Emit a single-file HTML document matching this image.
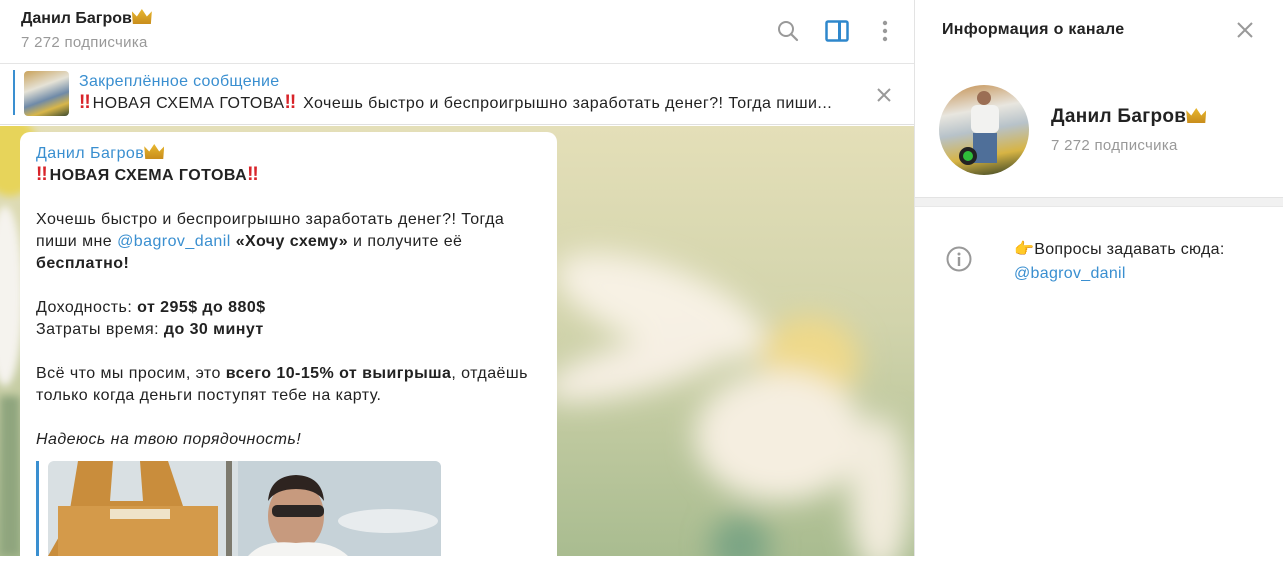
<!DOCTYPE html>
<html><head><meta charset="utf-8"><style>
*{margin:0;padding:0;box-sizing:border-box}
body{width:1283px;height:556px;overflow:hidden;font-family:"Liberation Sans","Noto Sans CJK SC",sans-serif;background:#fff;position:relative}
.abs{position:absolute}
.crown{display:inline-block;width:20px;height:15px;vertical-align:-1px;background:linear-gradient(#e8b830,#c98d1c);clip-path:polygon(0 15%,25% 50%,50% 0,75% 50%,100% 15%,95% 100%,5% 100%)}
.ex{color:#d8242a;font-weight:bold;font-size:19px;letter-spacing:-1px;margin-right:3px;line-height:16px}
.link{color:#3a8fd0}
b{font-weight:bold}
</style></head><body>
<!-- header -->
<div class="abs" style="left:0;top:0;width:914px;height:64px;background:#fff;border-bottom:1px solid #e5e5e5"></div>
<div class="abs" style="left:21px;top:9px;font-size:16px;font-weight:bold;color:#222">Данил Багров<span class="crown"></span></div>
<div class="abs" style="left:21px;top:34px;font-size:15px;color:#999;letter-spacing:.3px">7 272 подписчика</div>
<svg class="abs" style="left:776px;top:19px" width="24" height="24" viewBox="0 0 24 24"><circle cx="10" cy="10" r="7" fill="none" stroke="#999" stroke-width="2"/><path d="M15 15l6 6" stroke="#999" stroke-width="2.2" stroke-linecap="round"/></svg>
<svg class="abs" style="left:825px;top:20px" width="24" height="22" viewBox="0 0 24 22"><rect x="1.5" y="1.5" width="21" height="19" rx="1.5" fill="none" stroke="#2e87cc" stroke-width="2.5"/><rect x="13" y="2" width="3" height="18" fill="#2e87cc"/></svg>
<svg class="abs" style="left:880px;top:19px" width="10" height="24" viewBox="0 0 10 24"><circle cx="5" cy="4" r="2.2" fill="#999"/><circle cx="5" cy="12" r="2.2" fill="#999"/><circle cx="5" cy="20" r="2.2" fill="#999"/></svg>
<!-- pinned -->
<div class="abs" style="left:0;top:65px;width:914px;height:60px;background:#fff;border-bottom:1px solid #e0e0e0"></div>
<div class="abs" style="left:13px;top:70px;width:2px;height:45px;background:#3a8fd0"></div>
<div class="abs" style="left:24px;top:71px;width:45px;height:45px;border-radius:4px;background:linear-gradient(160deg,#c9a25a 0%,#e5e2d6 35%,#6f8aa8 60%,#d8b64a 78%,#3c4a2e 100%)"></div>
<div class="abs" style="left:79px;top:73px;font-size:16px;color:#3a8fd0;letter-spacing:.3px">Закреплённое сообщение</div>
<div class="abs" style="left:79px;top:95px;font-size:16px;color:#222;white-space:nowrap;letter-spacing:.45px"><span class="ex">!!</span>НОВАЯ СХЕМА ГОТОВА<span class="ex">!!</span> Хочешь быстро и беспроигрышно заработать денег?! Тогда пиши...</div>
<svg class="abs" style="left:876px;top:87px" width="16" height="16" viewBox="0 0 16 16"><path d="M2 2l12 12M14 2L2 14" stroke="#999" stroke-width="2"/></svg>
<!-- background -->
<svg class="abs" style="left:0;top:126px" width="914" height="430" viewBox="0 0 914 430">
<defs><linearGradient id="bg" x1="0" y1="0" x2="0" y2="1"><stop offset="0" stop-color="#e4dfb8"/><stop offset=".45" stop-color="#d2d4ac"/><stop offset="1" stop-color="#a9bc90"/></linearGradient>
<filter id="bl" x="-50%" y="-50%" width="200%" height="200%"><feGaussianBlur stdDeviation="14"/></filter>
<filter id="bl2"><feGaussianBlur stdDeviation="4"/></filter></defs>
<rect width="914" height="430" fill="url(#bg)"/>
<g filter="url(#bl)">
<ellipse cx="660" cy="180" rx="110" ry="40" fill="#f7f1e4" transform="rotate(20 660 180)"/>
<ellipse cx="640" cy="240" rx="100" ry="25" fill="#f6efe3" transform="rotate(-15 640 240)"/>
<ellipse cx="810" cy="235" rx="50" ry="45" fill="#efd98a"/>
<ellipse cx="780" cy="310" rx="85" ry="65" fill="#f5eee0"/>
<ellipse cx="880" cy="370" rx="30" ry="80" fill="#f2ecdd"/>
<ellipse cx="740" cy="420" rx="30" ry="30" fill="#7aa484"/>
</g>
<g filter="url(#bl2)">
<ellipse cx="10" cy="30" rx="30" ry="40" fill="#e7d45a"/>
<ellipse cx="5" cy="170" rx="18" ry="90" fill="#f5f3ee"/>
<rect x="0" y="270" width="20" height="160" fill="#8fa57e"/>
</g>
</svg>
<!-- bubble -->
<div class="abs" style="left:20px;top:132px;width:537px;height:440px;background:#fff;border-radius:10px"></div>
<div class="abs" style="left:36px;top:143px;width:520px;font-size:16px;line-height:22px;color:#222;letter-spacing:.45px">
<div style="color:#3a8fd0">Данил Багров<span class="crown"></span></div>
<div style="font-weight:bold;margin-top:0"><span class="ex">!!</span>НОВАЯ СХЕМА ГОТОВА<span class="ex">!!</span></div>
<div style="margin-top:22px">Хочешь быстро и беспроигрышно заработать денег?! Тогда<br>пиши мне <span class="link">@bagrov_danil</span> <b>«Хочу схему»</b> и получите её<br><b>бесплатно!</b></div>
<div style="margin-top:22px">Доходность: <b>от 295$ до 880$</b><br>Затраты время: <b>до 30 минут</b></div>
<div style="margin-top:22px">Всё что мы просим, это <b>всего 10-15% от выигрыша</b>, отдаёшь<br>только когда деньги поступят тебе на карту.</div>
<div style="margin-top:22px;font-style:italic">Надеюсь на твою порядочность!</div>
</div>
<div class="abs" style="left:36px;top:461px;width:3px;height:95px;background:#3a8fd0"></div>
<svg class="abs" style="left:48px;top:461px" width="393" height="95" viewBox="0 0 393 95">
<defs><clipPath id="c"><rect width="393" height="120" rx="6"/></clipPath></defs>
<g clip-path="url(#c)">
<rect width="393" height="95" fill="#d9e0e3"/>
<rect x="190" y="0" width="203" height="95" fill="#c6d2d8"/>
<path d="M0 95 L20 60 L30 0 L65 0 L62 40 L95 40 L92 0 L120 0 L140 60 L170 95Z" fill="#c98d3c"/>
<rect x="10" y="45" width="160" height="50" fill="#d49a4a"/>
<rect x="62" y="48" width="60" height="10" fill="#efe3c8"/>
<rect x="178" y="0" width="6" height="95" fill="#7d7a6e"/>
<ellipse cx="248" cy="55" rx="28" ry="35" fill="#c79a7e"/>
<path d="M220 40 Q222 15 248 14 Q274 15 276 40 Q268 28 248 28 Q228 28 220 40Z" fill="#2e2420"/>
<rect x="224" y="44" width="52" height="12" rx="5" fill="#2b2624"/>
<path d="M200 95 Q215 78 248 82 Q282 78 300 95Z" fill="#f4f4f2"/>
<ellipse cx="340" cy="60" rx="50" ry="12" fill="#e8ecee"/>
</g></svg>
<!-- right panel -->
<div class="abs" style="left:914px;top:0;width:1px;height:556px;background:#e3e3e3"></div>
<div class="abs" style="left:942px;top:21px;font-size:16px;font-weight:bold;color:#222;letter-spacing:.3px">Информация о канале</div>
<svg class="abs" style="left:1236px;top:21px" width="18" height="18" viewBox="0 0 18 18"><path d="M2 2l14 14M16 2L2 16" stroke="#999" stroke-width="2"/></svg>
<div class="abs" style="left:939px;top:85px;width:90px;height:90px;border-radius:50%;overflow:hidden;background:linear-gradient(170deg,#c49050 0%,#e8e6df 30%,#b7c2c9 50%,#d7b444 75%,#2c3a22 100%)">
<div class="abs" style="left:38px;top:6px;width:14px;height:14px;border-radius:50%;background:#9b6e54"></div>
<div class="abs" style="left:32px;top:20px;width:28px;height:28px;background:#f2f2f0;border-radius:6px"></div>
<div class="abs" style="left:34px;top:48px;width:24px;height:30px;background:#4f6f99"></div>
<div class="abs" style="left:20px;top:62px;width:18px;height:18px;border-radius:50%;background:#2fbd3a;border:4px solid #222"></div>
</div>
<div class="abs" style="left:1051px;top:106px;font-size:19px;font-weight:bold;color:#222;letter-spacing:.3px">Данил Багров<span class="crown"></span></div>
<div class="abs" style="left:1051px;top:137px;font-size:15px;color:#999;letter-spacing:.3px">7 272 подписчика</div>
<div class="abs" style="left:915px;top:197px;width:368px;height:10px;background:#f1f1f1;border-top:1px solid #e3e3e3;border-bottom:1px solid #e8e8e8"></div>
<svg class="abs" style="left:946px;top:246px" width="26" height="26" viewBox="0 0 26 26"><circle cx="13" cy="13" r="11.5" fill="none" stroke="#999" stroke-width="2"/><circle cx="13" cy="8" r="1.5" fill="#999"/><rect x="11.8" y="11" width="2.4" height="9" fill="#999"/></svg>
<div class="abs" style="left:1014px;top:238px;font-size:16px;line-height:24px;color:#222;letter-spacing:.3px"><span style="color:#e0a830">👉</span>Вопросы задавать сюда:<br><span class="link">@bagrov_danil</span></div>
</body></html>
